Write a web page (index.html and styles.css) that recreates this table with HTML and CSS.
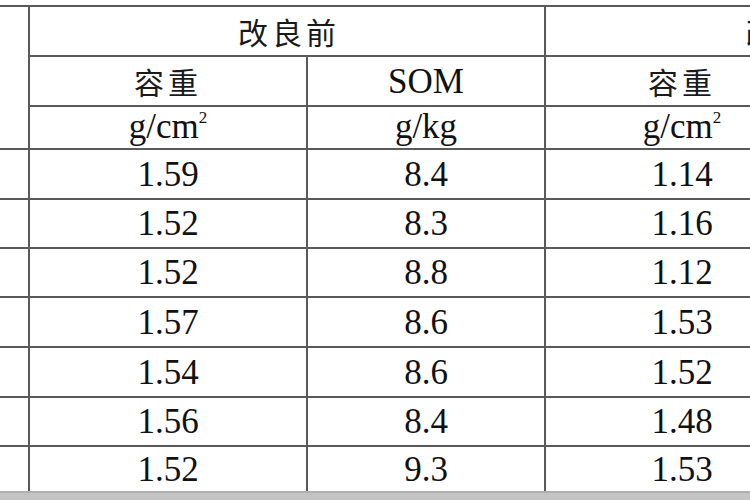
FILE: index.html
```html
<!DOCTYPE html>
<html lang="zh">
<head>
<meta charset="utf-8">
<link rel="stylesheet" href="styles.css">
</head>
<body>
<div class="page">
  <table class="soil">
    <colgroup>
      <col class="c-label">
      <col class="c-wide">
      <col class="c-narrow">
      <col class="c-wide2">
      <col class="c-narrow">
    </colgroup>
    <thead>
      <tr class="h1">
        <th class="label" rowspan="3"></th>
        <th class="zh group" colspan="2">改良前</th>
        <th class="zh group after" colspan="2">改良后</th>
      </tr>
      <tr class="h2">
        <th class="zh">容重</th>
        <th>SOM</th>
        <th class="zh">容重</th>
        <th></th>
      </tr>
      <tr class="h3">
        <th>g/cm<sup>2</sup></th>
        <th>g/kg</th>
        <th>g/cm<sup>2</sup></th>
        <th></th>
      </tr>
    </thead>
    <tbody>
      <tr class="r50"><td class="label"></td><td>1.59</td><td>8.4</td><td>1.14</td><td></td></tr>
      <tr class="r49"><td class="label"></td><td>1.52</td><td>8.3</td><td>1.16</td><td></td></tr>
      <tr class="r49"><td class="label"></td><td>1.52</td><td>8.8</td><td>1.12</td><td></td></tr>
      <tr class="r50"><td class="label"></td><td>1.57</td><td>8.6</td><td>1.53</td><td></td></tr>
      <tr class="r50"><td class="label"></td><td>1.54</td><td>8.6</td><td>1.52</td><td></td></tr>
      <tr class="r49"><td class="label"></td><td>1.56</td><td>8.4</td><td>1.48</td><td></td></tr>
      <tr class="last"><td class="label"></td><td>1.52</td><td>9.3</td><td>1.53</td><td></td></tr>
    </tbody>
  </table>
  <div class="footer-band"></div>
</div>
</body>
</html>
```

FILE: styles.css
```css
html, body {
  margin: 0;
  padding: 0;
  background: #ffffff;
  overflow: hidden;
  width: 750px;
  height: 500px;
}

.page {
  width: 750px;
  height: 500px;
  overflow: hidden;
  display: flex;
  flex-direction: column;
}

.soil {
  flex: none;
  margin-top: 5px;
  margin-left: -60px;
  width: 1118px;
  table-layout: fixed;
  border-collapse: separate;
  border-spacing: 0;
  border-top: 2px solid #5a5a5a;
  font-family: "Liberation Serif", "Times New Roman", serif;
  font-size: 35px;
  color: #111111;
}

.c-label { width: 90px; }
.c-wide { width: 278px; }
.c-narrow { width: 238px; }
.c-wide2 { width: 274px; }

.soil th,
.soil td {
  box-sizing: border-box;
  padding: 0;
  text-align: center;
  vertical-align: middle;
  font-weight: normal;
  border-right: 2px solid #5a5a5a;
  border-bottom: 2px solid #5a5a5a;
  line-height: 1;
  white-space: nowrap;
}

.soil .zh {
  font-family: "Noto Sans CJK SC", "Noto Sans CJK TC", sans-serif;
  font-size: 30px;
  font-weight: 400;
  letter-spacing: 4px;
  color: #1a1a1a;
}

.soil .group {
  padding-left: 4px;
}

.soil .group.after {
  padding-left: 0;
  padding-right: 9px;
}

.soil sup {
  font-size: 17px;
  line-height: 0;
  vertical-align: 15px;
}

.h1 { height: 50px; }
.h2 { height: 50px; }
.h3 { height: 43px; }
.h3 th { vertical-align: bottom; padding-bottom: 4px; }
.r50 { height: 50px; }
.r49 { height: 49px; }
.last { height: 44px; }
.last td { border-bottom: none; }

.footer-band {
  flex: 1;
  background: #c4c4c4;
  border-top: 2px solid #b0b0b0;
}
```
